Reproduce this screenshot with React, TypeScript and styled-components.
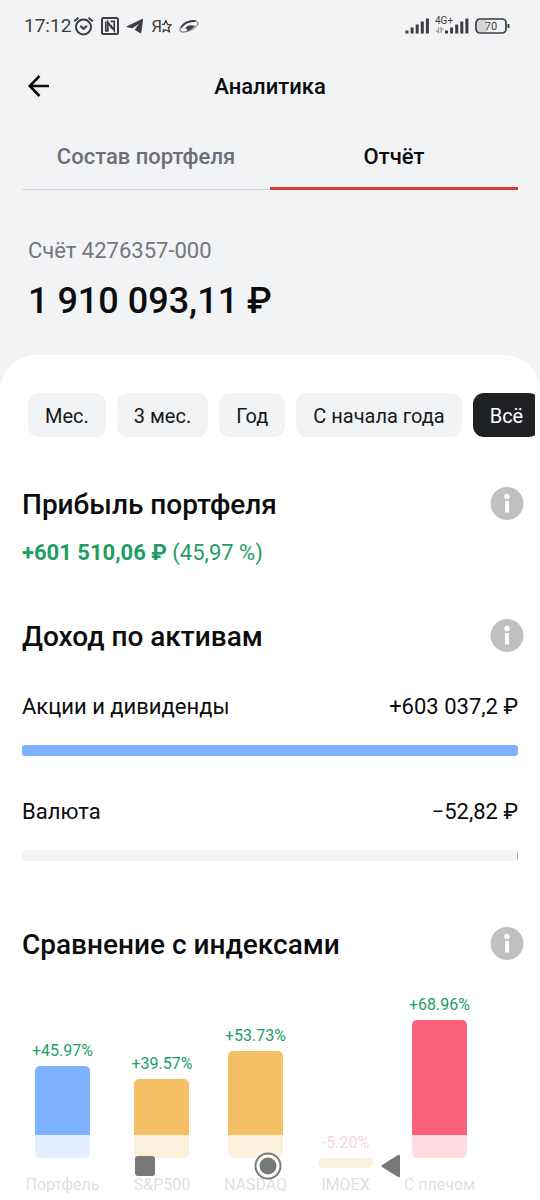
import React, { useState } from "react";
import styled, { createGlobalStyle } from "styled-components";

const GlobalStyle = createGlobalStyle`
  *, *::before, *::after { box-sizing: border-box; }
  body {
    margin: 0;
    background: #f2f3f5;
    color: #0b0c0e;
    font-family: Roboto, "Liberation Sans", sans-serif;
    font-size: 22px;
    line-height: 28px;
  }
  button { font: inherit; color: inherit; border: 0; padding: 0; background: none; cursor: pointer; }
  h1, h2, p, ul { margin: 0; padding: 0; }
  svg { display: block; flex: none; }
`;

const Screen = styled.div`
  display: flex;
  flex-direction: column;
  min-height: 100vh;
`;

const StatusBar = styled.div`
  display: flex;
  align-items: center;
  justify-content: space-between;
  height: 52px;
  padding: 0 30px 0 24px;
  color: #3c3d40;
`;

const StatusGroup = styled.div<{ $gap: number }>`
  display: flex;
  align-items: center;
  gap: ${(p) => p.$gap}px;
`;

const Clock = styled.time`
  font-size: 19px;
  line-height: 24px;
`;

const Header = styled.header`
  display: grid;
  grid-template-columns: 24px 1fr 24px;
  align-items: center;
  height: 68px;
  padding: 0 27px;
`;

const BackButton = styled.button`
  width: 24px;
  height: 24px;
`;

const Title = styled.h1`
  padding-top: 2px;
  font-size: 22px;
  font-weight: 500;
  text-align: center;
`;

const Tabs = styled.nav`
  display: flex;
  margin: 0 22px;
`;

const Tab = styled.button<{ $active: boolean }>`
  display: flex;
  flex: 1 1 0;
  justify-content: center;
  height: 70px;
  padding-top: 23px;
  font-weight: 500;
  color: ${(p) => (p.$active ? "#0b0c0e" : "#6d6f76")};
  box-shadow: inset 0 ${(p) => (p.$active ? "-3px 0 #d93a30" : "-1px 0 #d3d5da")};
`;

const Account = styled.section`
  padding: 47px 28px 32px;
`;

const AccountName = styled.p`
  color: #75777d;
`;

const Balance = styled.p`
  margin-top: 14px;
  font-size: 36px;
  line-height: 44px;
  font-weight: 500;
`;

const Panel = styled.main`
  flex: 1;
  padding: 38px 0 5px;
  background: #fff;
  border-radius: 36px 36px 0 0;
`;

const Periods = styled.div`
  display: flex;
  gap: 11px;
  margin-right: 5px;
  padding-left: 28px;
  overflow-x: auto;
  scrollbar-width: none;
`;

const Chip = styled.button<{ $active: boolean }>`
  flex: none;
  height: 44px;
  padding: 1px 17px 0;
  border-radius: 11px;
  font-size: 20px;
  line-height: 24px;
  white-space: nowrap;
  background: ${(p) => (p.$active ? "#202124" : "#f2f3f5")};
  color: ${(p) => (p.$active ? "#fff" : "#17181a")};
`;

const Section = styled.section<{ $top: number }>`
  margin-top: ${(p) => p.$top}px;
  padding: 0 22px;
`;

const SectionHead = styled.div`
  display: flex;
  align-items: center;
  justify-content: space-between;
  height: 36px;
  margin-right: -6px;
`;

const Heading = styled.h2`
  padding-top: 2px;
  font-size: 28px;
  line-height: 34px;
  font-weight: 500;
`;

const InfoButton = styled.button`
  width: 34px;
  height: 34px;
`;

const Profit = styled.p`
  margin-top: 17px;
  color: #1d9e63;

  strong { font-weight: 700; }
`;

const Asset = styled.div<{ $top: number }>`
  margin-top: ${(p) => p.$top}px;
`;

const AssetLine = styled.div`
  display: flex;
  justify-content: space-between;
`;

const Track = styled.div<{ $end?: boolean }>`
  display: flex;
  justify-content: ${(p) => (p.$end ? "flex-end" : "flex-start")};
  height: 11px;
  margin-top: 24px;
  border-radius: 3px;
  overflow: hidden;
  background: #f2f3f5;
`;

const Fill = styled.div<{ $color: string }>`
  min-width: 1px;
  background: ${(p) => p.$color};
`;

const Chart = styled.ul`
  display: grid;
  grid-template-columns: 81px 62px 69px 55px 77px;
  gap: 28px;
  margin-top: 32px;
  list-style: none;
`;

const Column = styled.li`
  display: flex;
  flex-direction: column;
  align-items: center;
  font-size: 16px;
  line-height: 20px;
  white-space: nowrap;
`;

const Above = styled.div`
  display: flex;
  flex-direction: column;
  align-items: center;
  justify-content: flex-end;
  gap: 5px;
  height: 164px;
`;

const Below = styled.div`
  height: 10px;
`;

const Value = styled.span<{ $negative: boolean }>`
  color: ${(p) => (p.$negative ? "#dc3a4a" : "#1d9e63")};
`;

const Bar = styled.div<{ $color: string }>`
  width: 55px;
  border-radius: 5px;
  background: ${(p) => p.$color};
`;

const BarName = styled.span`
  margin-top: 7px;
  color: #6d6f76;
`;

const SystemNav = styled.nav`
  position: fixed;
  inset: auto 0 0 0;
  display: flex;
  justify-content: center;
  gap: 83px;
  height: 65px;
  padding: 11px 4px 0 0;
  background: rgba(255, 255, 255, 0.78);
`;

const SystemButton = styled.button`
  display: grid;
  place-items: center;
  width: 40px;
  height: 40px;
`;

const AlarmIcon = () => (
  <svg width="21" height="21" viewBox="0 0 21 21" fill="none" stroke="currentColor" strokeWidth="2" aria-hidden="true">
    <circle cx="10.500" cy="11" r="7.500" />
    <path d="M1.200 5.200 5.500 1.800M19.800 5.200 15.500 1.800" />
    <path d="m7.300 9.800 3.200 3 3.500-3" />
  </svg>
);

const NfcIcon = () => (
  <svg width="18" height="18" viewBox="0 0 18 18" fill="none" stroke="currentColor" aria-hidden="true">
    <rect x="1" y="1" width="16" height="16" rx="1.500" strokeWidth="2" />
    <path d="M4 14h2.800V5L11 11.500" strokeWidth="1.700" />
    <path d="M4.800 14V4.500" strokeWidth="1.700" />
    <path d="M9.500 4.300h3.700v9.200L9.500 8" strokeWidth="1.700" />
  </svg>
);

const TelegramIcon = () => (
  <svg width="18" height="16" viewBox="0 0 18 16" fill="currentColor" aria-hidden="true">
    <path d="M1 8.200 16 1.100q1.300-.4 1.100 1L15.300 14.600q-.3 1.100-1.400.5L8.600 11.800l4.500-6-6.600 4.500L1.200 9.200q-1-.4-.2-1Z" />
  </svg>
);

const Letter = styled.span`
  font-size: 17px;
  line-height: 20px;
`;

const StarIcon = () => (
  <svg width="10" height="15" viewBox="0 0 10 15" fill="none" stroke="currentColor" strokeWidth="1.300" strokeLinejoin="round" aria-hidden="true">
    <path d="M0 5.300h2.300L3.800 1.500 5.400 5.300l3.800.4L6.400 8.500l1.200 4.500L4 10.800 1 12.800l.7-3" />
  </svg>
);

const PlanetIcon = () => (
  <svg width="20" height="15" viewBox="0 0 20 15" fill="none" stroke="currentColor" aria-hidden="true">
    <path d="M1 11.800C-.2 9.500 5 3.300 12 2c5.500-1 7.600.8 6.800 3-1.200 3.500-7 6.800-12 7.700-3 .6-5.200.3-5.800-.9Z" strokeWidth=".8" />
    <path d="M2 8.500C5 4 10.500 1.600 16.500 2" strokeWidth="1.900" />
    <path d="M6 9.500C8 6.300 12 5.300 16 7c-2.300 2.500-5.500 4.600-8.700 5 1.700-1.800.8-2.500-1.300-2.500Z" fill="currentColor" stroke="none" />
  </svg>
);

const SIGNAL_STEPS = [3, 6, 9, 12, 15];

const SignalBars = ({ x }: { x: number }) => (
  <g stroke="currentColor" strokeWidth="3">
    {SIGNAL_STEPS.map((h, i) => (
      <path key={h} d={`M${x + i * 5.1} 17.500v-${h}`} />
    ))}
  </g>
);

const SignalIcon = () => (
  <svg width="64" height="20" viewBox="0 0 64 20" role="img" aria-label="Сигнал сети">
    <SignalBars x={2} />
    <text x="30" y="8" fontSize="10" fill="currentColor">4G+</text>
    <g stroke="#9c9da1" strokeWidth="1.300" fill="none">
      <path d="M33.500 11.500v5l-2.500-2M36 17v-5l2.500 2" />
    </g>
    <SignalBars x={41.500} />
  </svg>
);

const BatteryIcon = () => (
  <svg width="35" height="16" viewBox="0 0 35 16" role="img" aria-label="Заряд 70 процентов">
    <rect x="2" y="2" width="10" height="12" rx="2" fill="#d3d4d6" />
    <rect x="1" y="1" width="30" height="14" rx="4" fill="none" stroke="currentColor" strokeWidth="1.700" />
    <path d="M33.500 6v4" stroke="currentColor" strokeWidth="2" />
    <text x="16" y="12" fontSize="11" textAnchor="middle" fill="currentColor">70</text>
  </svg>
);

const BackIcon = () => (
  <svg width="24" height="24" viewBox="0 0 24 24" fill="none" stroke="#0b0c0e" strokeWidth="2.600" aria-hidden="true">
    <path d="M22 12H3M12.500 2 2.800 12l9.700 10" />
  </svg>
);

const InfoIcon = () => (
  <svg width="34" height="34" viewBox="0 0 34 34" aria-hidden="true">
    <circle cx="17" cy="16.500" r="16.500" fill="#c0c0c3" />
    <circle cx="17" cy="9.500" r="2.700" fill="#fff" />
    <path d="M17 14v11.500" stroke="#fff" strokeWidth="4" />
  </svg>
);

const TABS = ["Состав портфеля", "Отчёт"];
const PERIODS = ["Мес.", "3 мес.", "Год", "С начала года", "Всё"];

const INDEXES = [
  { name: "Портфель", value: 45.97, color: "#7eb1ff" },
  { name: "S&P500", value: 39.57, color: "#f5bf66" },
  { name: "NASDAQ", value: 53.73, color: "#f5bf66" },
  { name: "IMOEX", value: -5.2, color: "#f5bf66" },
  { name: "С плечом", value: 68.96, color: "#fb617b" },
];

const formatPercent = (v: number) => `${v > 0 ? "+" : ""}${v.toFixed(2)}%`;

const SectionTitle = ({ children }: { children: string }) => (
  <SectionHead>
    <Heading>{children}</Heading>
    <InfoButton aria-label={`Подробнее: ${children}`}>
      <InfoIcon />
    </InfoButton>
  </SectionHead>
);

const IndexColumn = ({ name, value, color }: { name: string; value: number; color: string }) => {
  const bar = <Bar $color={color} style={{ height: Math.round(Math.abs(value) * 2) }} />;
  return (
    <Column>
      <Above>
        <Value $negative={value < 0}>{formatPercent(value)}</Value>
        {value > 0 ? bar : <span />}
      </Above>
      <Below>{value < 0 && bar}</Below>
      <BarName>{name}</BarName>
    </Column>
  );
};

export default function App() {
  const [tab, setTab] = useState(TABS[1]);
  const [period, setPeriod] = useState("Всё");

  return (
    <Screen>
      <GlobalStyle />
      <StatusBar>
        <StatusGroup $gap={7}>
          <StatusGroup $gap={2}>
            <Clock>17:12</Clock>
            <AlarmIcon />
          </StatusGroup>
          <NfcIcon />
          <TelegramIcon />
          <StatusGroup $gap={0}>
            <Letter>Я</Letter>
            <StarIcon />
          </StatusGroup>
          <PlanetIcon />
        </StatusGroup>
        <StatusGroup $gap={6}>
          <SignalIcon />
          <BatteryIcon />
        </StatusGroup>
      </StatusBar>

      <Header>
        <BackButton aria-label="Назад">
          <BackIcon />
        </BackButton>
        <Title>Аналитика</Title>
      </Header>

      <Tabs>
        {TABS.map((t) => (
          <Tab key={t} $active={t === tab} onClick={() => setTab(t)}>
            {t}
          </Tab>
        ))}
      </Tabs>

      <Account>
        <AccountName>Счёт 4276357-000</AccountName>
        <Balance>1 910 093,11 ₽</Balance>
      </Account>

      <Panel>
        <Periods>
          {PERIODS.map((p) => (
            <Chip key={p} $active={p === period} onClick={() => setPeriod(p)}>
              {p}
            </Chip>
          ))}
        </Periods>

        <Section $top={49}>
          <SectionTitle>Прибыль портфеля</SectionTitle>
          <Profit>
            <strong>+601 510,06 ₽</strong> (45,97 %)
          </Profit>
        </Section>

        <Section $top={51}>
          <SectionTitle>Доход по активам</SectionTitle>
          <Asset $top={39}>
            <AssetLine>
              <span>Акции и дивиденды</span>
              <span>+603 037,2 ₽</span>
            </AssetLine>
            <Track>
              <Fill $color="#7eb1ff" style={{ width: "100%" }} />
            </Track>
          </Asset>
          <Asset $top={42}>
            <AssetLine>
              <span>Валюта</span>
              <span>−52,82 ₽</span>
            </AssetLine>
            <Track $end>
              <Fill $color="#b4b7c0" style={{ width: "0.01%" }} />
            </Track>
          </Asset>
        </Section>

        <Section $top={65}>
          <SectionTitle>Сравнение с индексами</SectionTitle>
          <Chart>
            {INDEXES.map((item) => (
              <IndexColumn key={item.name} {...item} />
            ))}
          </Chart>
        </Section>
      </Panel>

      <SystemNav aria-label="Системная навигация">
        <SystemButton aria-label="Недавние">
          <svg width="20" height="20" viewBox="0 0 20 20" aria-hidden="true">
            <rect width="20" height="20" rx="3" fill="#777" />
          </svg>
        </SystemButton>
        <SystemButton aria-label="Домой">
          <svg width="28" height="28" viewBox="0 0 28 28" aria-hidden="true">
            <circle cx="14" cy="14" r="12.500" fill="#fff" stroke="#777" strokeWidth="2" />
            <circle cx="14" cy="14" r="8.500" fill="#777" />
          </svg>
        </SystemButton>
        <SystemButton aria-label="Назад">
          <svg width="20" height="24" viewBox="0 0 20 24" aria-hidden="true">
            <path d="M1 11 17 1q2-1 2 1v20q0 2-2 1L1 13q-1-1 0-2Z" fill="#777" />
          </svg>
        </SystemButton>
      </SystemNav>
    </Screen>
  );
}
